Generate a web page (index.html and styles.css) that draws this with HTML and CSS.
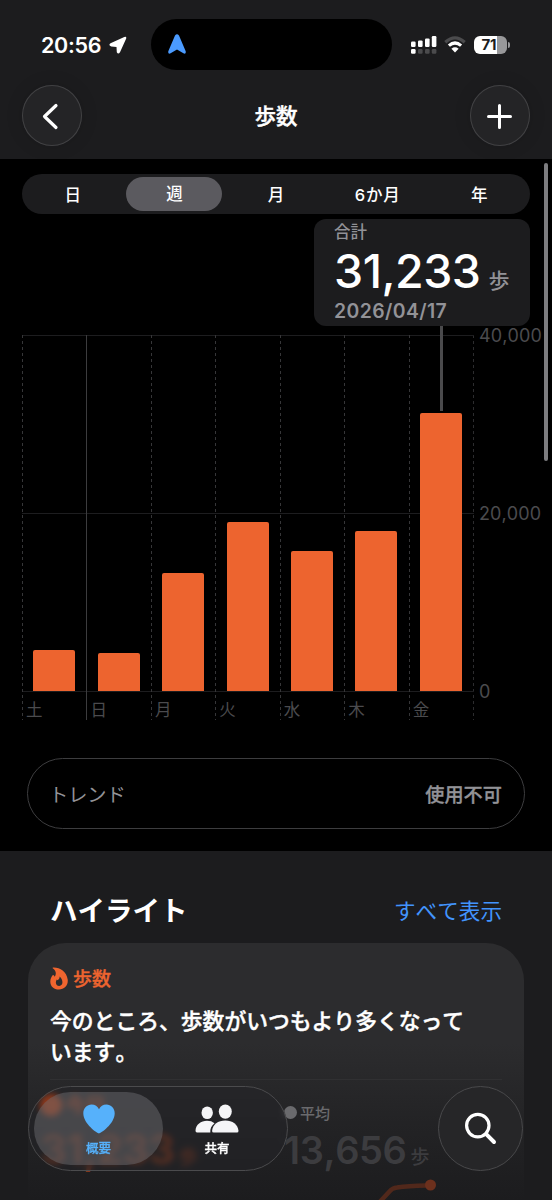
FILE: index.html
```html
<!DOCTYPE html>
<html lang="ja">
<head>
    <meta charset="UTF-8">
    <meta name="viewport" content="width=device-width, initial-scale=1.0">
    <title>歩数</title>
    <link rel="stylesheet" href="styles.css">
</head>
<body>

    <div class="screen">
        <header class="header">
            <div class="status-bar">
                <div class="clock">
                    <span class="time">20:56</span>
                    <svg width="18" height="18" viewBox="0 0 18 18"><path d="M1.500 7.300 15.300.900Q17.900.100 17.100 2.700L11 16.300Q9.200 18.900 7.800 16.200L7.500 11 2.300 10.500Q-1 9.200 1.500 7.300Z" fill="#fff"/></svg>
                </div>
                <div class="island">
                    <svg width="18" height="20" viewBox="0 0 18 20"><path d="M7 1.500Q9-1.100 11 1.500L17.700 17.300Q18.200 20.500 15.400 19.300L9 15.600 2.600 19.300Q-.200 20.500.300 17.300Z" fill="#4b9bff"/></svg>
                </div>
                <div class="indicators">
                    <svg width="26" height="18" viewBox="0 0 26 18">
                        <g fill="#fff">
                            <rect x="0" y="5.6" width="4.6" height="5.4" rx="1.2"/>
                            <rect x="7" y="4.4" width="4.6" height="6.6" rx="1.2"/>
                            <rect x="14" y="2.4" width="4.6" height="8.6" rx="1.2"/>
                            <rect x="20.8" y="0" width="4.6" height="11" rx="1.2"/>
                            <rect x="0" y="13" width="4.6" height="4.8" rx="1.2"/>
                        </g>
                        <g fill="#4b4b4d">
                            <rect x="7" y="13" width="4.6" height="4.8" rx="1.2"/>
                            <rect x="14" y="13" width="4.6" height="4.8" rx="1.2"/>
                            <rect x="20.8" y="13" width="4.6" height="4.8" rx="1.2"/>
                        </g>
                    </svg>
                    <svg width="22" height="17" viewBox="0 0 22 17" fill="none">
                        <path d="M1.3 6.2Q11-2.6 20.7 6.2" stroke="#4b4b4d" stroke-width="3.2"/>
                        <path d="M4.9 9.6Q11 4.4 17.1 9.6" stroke="#fff" stroke-width="3.2"/>
                        <path d="M7.4 12.8Q11 9.9 14.6 12.8L11 16.6Z" fill="#fff"/>
                    </svg>
                    <div class="battery"><span class="level">71</span><i class="battery-tip"></i></div>
                </div>
            </div>
            <div class="nav-bar">
                <button class="round-button" aria-label="戻る">
                    <svg width="60" height="60" viewBox="0 0 60 60"><path d="M34 19.5 22.5 30.5 34 41.5" fill="none" stroke="#fff" stroke-width="3.2" stroke-linecap="round" stroke-linejoin="round"/></svg>
                </button>
                <h1 class="title">歩数</h1>
                <button class="round-button" aria-label="追加">
                    <svg width="60" height="60" viewBox="0 0 60 60"><path d="M29.5 19.5V41.500M18.500 30.500H40.500" fill="none" stroke="#fff" stroke-width="3" stroke-linecap="round"/></svg>
                </button>
            </div>
        </header>

        <main class="steps">
            <div class="segments">
                <span class="segment">日</span>
                <span class="segment active"><b>週</b></span>
                <span class="segment">月</span>
                <span class="segment wide">6か月</span>
                <span class="segment">年</span>
            </div>

            <div class="chart">
                <div class="plot">
                    <div class="day"><div class="bar" style="height: 41px"></div><span class="day-name">土</span></div>
                    <div class="day solid"><div class="bar" style="height: 38px"></div><span class="day-name">日</span></div>
                    <div class="day"><div class="bar" style="height: 118px"></div><span class="day-name">月</span></div>
                    <div class="day"><div class="bar" style="height: 169px"></div><span class="day-name">火</span></div>
                    <div class="day"><div class="bar" style="height: 140px"></div><span class="day-name">水</span></div>
                    <div class="day"><div class="bar" style="height: 160px"></div><span class="day-name">木</span></div>
                    <div class="day"><div class="bar" style="height: 278px"></div><span class="day-name">金</span></div>
                </div>
                <div class="axis">
                    <span>40,000</span>
                    <span>20,000</span>
                    <span>0</span>
                </div>
                <div class="callout">
                    <div class="callout-label">合計</div>
                    <div class="callout-value">31,233<small>歩</small></div>
                    <div class="callout-date">2026/04/17</div>
                </div>
            </div>

            <div class="trend">
                <span>トレンド</span>
                <strong>使用不可</strong>
            </div>
        </main>

        <section class="highlights">
            <div class="section-head">
                <h2>ハイライト</h2>
                <a class="show-all">すべて表示</a>
            </div>
            <div class="card">
                <div class="card-title">
                    <svg width="18" height="23" viewBox="0 0 18 23"><path fill-rule="evenodd" d="M3 .6C9.5.2 16.600 4.500 17.700 12.400C18.400 18.500 14.500 22.500 9 22.500C3.600 22.500.2 19 .3 14.500C.4 11.800 1.400 9.800 2.600 8.300Q3.300 7.500 4 8.600L4.600 9.800C6.700 7.200 6 3.600 3 1.600Q2.200.8 3 .6ZM9.600 9.600C9.800 11.800 8.400 12.400 7.600 13.200L6.800 12.600C5 15.200 5.800 18.900 9.300 18.900C13.200 18.900 13.600 13 9.600 9.600Z" fill="#f0652f"/></svg>
                    <span>歩数</span>
                </div>
                <p class="card-text">今のところ、歩数がいつもより多くなっています。</p>
                <div class="stats">
                    <div class="stat today">
                        <div class="stat-name"><i class="dot"></i>今日</div>
                        <div class="stat-value">31,233<small>歩</small></div>
                    </div>
                    <div class="stat">
                        <div class="stat-name"><i class="dot"></i>平均</div>
                        <div class="stat-value">13,656<small>歩</small></div>
                        <svg class="spark" width="70" height="30" viewBox="0 0 70 30"><path d="M0 27 13 13Q16 9 21 8.500Q32 7 50 6.500" fill="none" stroke="#51281b" stroke-width="4.500"/><circle cx="54.500" cy="6" r="5.500" fill="#6c301d"/></svg>
                    </div>
                </div>
            </div>
        </section>

        <div class="scrollbar"></div>

        <nav class="tab-bar">
            <div class="tabs">
                <a class="tab active">
                    <svg width="32" height="30" viewBox="0 0 32 30"><path d="M16 29.500C14.500 29.500.3 20 .3 9.300C.3 4.200 4 .6 8.600.6C12 .6 14.600 2.300 16 5.200C17.400 2.300 20 .6 23.400.6C28 .6 31.700 4.200 31.700 9.300C31.700 20 17.500 29.500 16 29.500Z" fill="#56b1fb"/></svg>
                    <span>概要</span>
                </a>
                <a class="tab">
                    <svg width="44" height="30" viewBox="0 0 44 30" fill="#f5f5f7">
                        <ellipse cx="12.200" cy="8.800" rx="5.700" ry="6.300"/>
                        <ellipse cx="30.300" cy="7.600" rx="6.500" ry="7.200"/>
                        <path d="M2 28.600Q.5 28.600.5 26.800C.8 20.500 6 16.800 12 16.800Q16.500 16.800 19.500 19.200C16.500 21.700 15 24.500 15.300 28.600Z"/>
                        <path d="M18.700 28.600Q17 28.600 17.100 26.700C17.700 20.500 23 16.600 30.300 16.600S42.800 20.500 43.500 26.700Q43.600 28.600 41.900 28.600Z"/>
                    </svg>
                    <span>共有</span>
                </a>
            </div>
            <button class="search" aria-label="検索">
                <svg width="34" height="34" viewBox="0 0 34 34" fill="none" stroke="#fff"><circle cx="13.800" cy="13.600" r="11.200" stroke-width="3.200"/><path d="M22.200 22.200 30 30" stroke-width="4" stroke-linecap="round"/></svg>
            </button>
        </nav>
    </div>

</body>
</html>
```
FILE: styles.css
```css
:root {
    --panel: #1c1c1e;
    --accent: #ed642f;
    --gray: #929297;
    --grid: #1d1d1f;
}

* {
    box-sizing: border-box;
}

body {
    margin: 0;
    background-color: #000;
    color: #fff;
    font-family: Inter, "Noto Sans CJK JP", sans-serif;
    font-kerning: none;
}

button {
    padding: 0;
    border: none;
    color: inherit;
}

svg {
    display: block;
    flex: none;
}

.screen {
    position: relative;
    display: flex;
    flex-direction: column;
    width: 552px;
    height: 1200px;
    overflow: hidden;
}

/* Header */
.header {
    flex: none;
    height: 159px;
    padding-top: 19px;
    background-color: var(--panel);
}

.status-bar {
    display: flex;
    align-items: center;
    height: 51px;
    padding-left: 41px;
}

.clock {
    display: flex;
    align-items: center;
    gap: 7px;
    width: 110px;
}

.time {
    width: 61px;
    font-size: 21.5px;
    font-weight: 600;
    letter-spacing: -0.3px;
    white-space: nowrap;
}

.island {
    display: flex;
    align-items: center;
    width: 241px;
    height: 51px;
    padding: 0 0 2px 17px;
    border-radius: 26px;
    background-color: #000;
}

.indicators {
    display: flex;
    align-items: center;
    gap: 7px;
    margin-left: 19px;
}

.battery {
    position: relative;
    width: 33px;
    height: 18px;
    margin-left: 1px;
    padding-right: 3px;
    border-radius: 6px;
    background: linear-gradient(90deg, #fff 70%, #98989a 70%);
    color: #1c1c1e;
    font-size: 15px;
    font-weight: 700;
    line-height: 18px;
    text-align: center;
}

.battery-tip {
    position: absolute;
    top: 6px;
    right: -3px;
    width: 2px;
    height: 6px;
    border-radius: 0 3px 3px 0;
    background-color: #98989a;
}

.nav-bar {
    display: flex;
    align-items: center;
    justify-content: space-between;
    padding: 15px 22px 0;
}

.round-button {
    width: 60px;
    height: 61px;
    border-radius: 50%;
    background-color: #242426;
    box-shadow: inset 0 0 0 1px #414143, 0 0 18px rgba(0, 0, 0, 0.12);
}

.title {
    margin: 0;
    font-size: 21.5px;
    font-weight: 500;
    line-height: 30px;
    -webkit-text-stroke: 0.4px;
}

/* Range picker and chart */
.steps {
    flex: none;
    height: 692px;
    padding-top: 15px;
}

.segments {
    display: grid;
    grid-template-columns: repeat(5, 1fr);
    height: 40px;
    margin: 0 22px;
    border-radius: 20px;
    background-color: var(--panel);
    font-size: 16.5px;
    font-weight: 500;
}

.segment {
    display: flex;
    align-items: center;
    justify-content: center;
}

.segment.wide {
    letter-spacing: 0.8px;
}

.segment b {
    width: 96px;
    height: 34px;
    border-radius: 17px;
    background-color: #5b5a5f;
    font-weight: 500;
    line-height: 35px;
    text-align: center;
}

.chart {
    position: relative;
    display: flex;
    margin: 121px 0 0 22px;
}

.plot {
    display: grid;
    grid-template-columns: repeat(7, 64.45px);
    width: 452px;
    height: 385px;
    background:
        linear-gradient(var(--grid), var(--grid)) 0 0 / 100% 1px no-repeat,
        linear-gradient(var(--grid), var(--grid)) 0 178px / 100% 1px no-repeat,
        linear-gradient(var(--grid), var(--grid)) 0 356px / 100% 1px no-repeat,
        repeating-linear-gradient(#2c2c2e 0 3px, transparent 3px 6px) 100% 0 / 1px 100% no-repeat;
}

.day {
    display: flex;
    flex-direction: column;
    justify-content: flex-end;
    background: repeating-linear-gradient(#363638 0 3px, transparent 3px 6px) 0 0 / 1px 100% no-repeat;
}

.day.solid {
    background: linear-gradient(#3c3c3e, #3c3c3e) 0 0 / 1px 100% no-repeat;
}

.bar {
    width: 42px;
    margin-left: 11.3px;
    border-radius: 2px 2px 0 0;
    background-color: var(--accent);
}

.day-name {
    height: 29px;
    padding-left: 4px;
    color: #4b4b4e;
    font-size: 16.5px;
    line-height: 38px;
}

.axis {
    display: flex;
    flex-direction: column;
    justify-content: space-between;
    height: 376px;
    margin: -9px 0 0 5px;
    color: #4b4b4e;
    font-size: 18px;
    letter-spacing: 0.1px;
    line-height: 20px;
}

/* Selected day, floats over the top of the chart */
.callout {
    position: absolute;
    top: -116px;
    right: 22px;
    width: 216px;
    height: 107px;
    padding: 0 20px;
    border-radius: 12px;
    background-color: var(--panel);
    color: var(--gray);
    font-weight: 600;
}

.callout::after {
    content: "";
    position: absolute;
    top: 107px;
    left: 126px;
    width: 3px;
    height: 85px;
    background-color: #4a4a4c;
}

.callout-label {
    height: 25px;
    font-size: 16.5px;
    font-weight: 500;
    line-height: 27px;
}

.callout-value {
    display: flex;
    align-items: baseline;
    height: 54px;
    color: #fff;
    font-size: 46.5px;
    font-weight: 500;
    line-height: 54px;
    letter-spacing: -0.5px;
}

.callout-value small {
    margin-left: 8px;
    color: var(--gray);
    font-size: 21px;
    font-weight: 500;
    line-height: 30px;
}

.callout-date {
    font-size: 19.4px;
    line-height: 27px;
    letter-spacing: 0.4px;
}

.trend {
    display: flex;
    align-items: center;
    justify-content: space-between;
    height: 71px;
    margin: 38px 27px 0;
    padding: 0 22px 0 21px;
    border: 1px solid #3d3d3f;
    border-radius: 36px;
    color: var(--gray);
    font-size: 19.2px;
}

.trend strong {
    font-weight: 500;
    -webkit-text-stroke: 0.3px;
}

/* Highlights */
.highlights {
    flex: 1;
    padding: 0 28px;
    background-color: var(--panel);
}

.section-head {
    display: flex;
    align-items: center;
    justify-content: space-between;
    height: 92px;
    padding: 24px 22px 0;
}

.section-head h2 {
    margin: 0;
    font-size: 27.5px;
    font-weight: 700;
}

.show-all {
    color: #4294fd;
    font-size: 21.6px;
}

.card {
    height: 300px;
    padding: 20px 22px 0;
    border-radius: 38px;
    background: linear-gradient(#2c2c2e 0, #2c2c2e 100px, #232325 180px, #1c1c1e 257px);
}

.card-title {
    display: flex;
    align-items: center;
    gap: 5px;
    height: 30px;
    color: var(--accent);
    font-size: 19px;
    font-weight: 500;
    -webkit-text-stroke: 0.3px;
}

.card-title span {
    margin-top: -2px;
}

.card-text {
    width: 430px;
    margin: 13px 0 0;
    font-size: 21.8px;
    font-weight: 500;
    line-height: 30.5px;
    -webkit-text-stroke: 0.4px;
}

.stats {
    display: grid;
    grid-template-columns: 234px 1fr;
    margin-top: 12px;
    padding-top: 20px;
    border-top: 1px solid #303032;
    color: #6a6a6d;
}

.stat-name {
    display: flex;
    align-items: center;
    gap: 3px;
    height: 25px;
    font-size: 15px;
    font-weight: 500;
}

.dot {
    width: 13px;
    height: 13px;
    border-radius: 50%;
    background-color: currentColor;
}

.stat-value {
    height: 50px;
    color: #3c3c3f;
    font-size: 38px;
    font-weight: 600;
    letter-spacing: -0.4px;
    line-height: 50px;
    white-space: nowrap;
}

.stat-value small {
    margin-left: 4px;
    font-size: 19px;
    font-weight: 500;
    letter-spacing: 0;
}

/* Sits under the tab bar glass */
.today {
    margin-left: -10px;
    color: #ff4d0d;
}

.today .stat-name {
    margin-top: -8px;
    font-size: 20px;
}

.today .dot {
    width: 22px;
    height: 22px;
}

.today .stat-value {
    margin-top: 7px;
    color: #85391d;
    font-size: 41px;
    font-weight: 700;
}

.spark {
    margin: 4px 0 0 92px;
}

/* Overlays */
.scrollbar {
    position: absolute;
    top: 163px;
    right: 4px;
    width: 4px;
    height: 298px;
    border-radius: 2px;
    background-color: #7d7d80;
}

.tab-bar {
    position: absolute;
    bottom: 29px;
    left: 28px;
    display: flex;
    justify-content: space-between;
    width: 495px;
}

.tabs {
    display: flex;
    width: 260px;
    height: 85px;
    padding: 5px;
    border: 1px solid #4b4b4d;
    border-radius: 43px;
    background-color: rgba(36, 36, 39, 0.5);
    backdrop-filter: blur(3px);
}

.tab {
    display: flex;
    flex-direction: column;
    align-items: center;
    width: 129px;
    padding-top: 12px;
    border-radius: 37px;
    font-size: 12.5px;
    font-weight: 500;
    line-height: 18px;
    -webkit-text-stroke: 0.3px;
}

.tab span {
    margin-top: 6px;
}

.tab.active {
    background-color: rgba(110, 110, 115, 0.48);
    color: #56b1fb;
}

.tab:last-child {
    width: 108px;
}

.search {
    display: flex;
    align-items: center;
    justify-content: center;
    width: 85px;
    height: 85px;
    border: 1px solid #49494b;
    border-radius: 50%;
    background-color: #262628;
}
```
